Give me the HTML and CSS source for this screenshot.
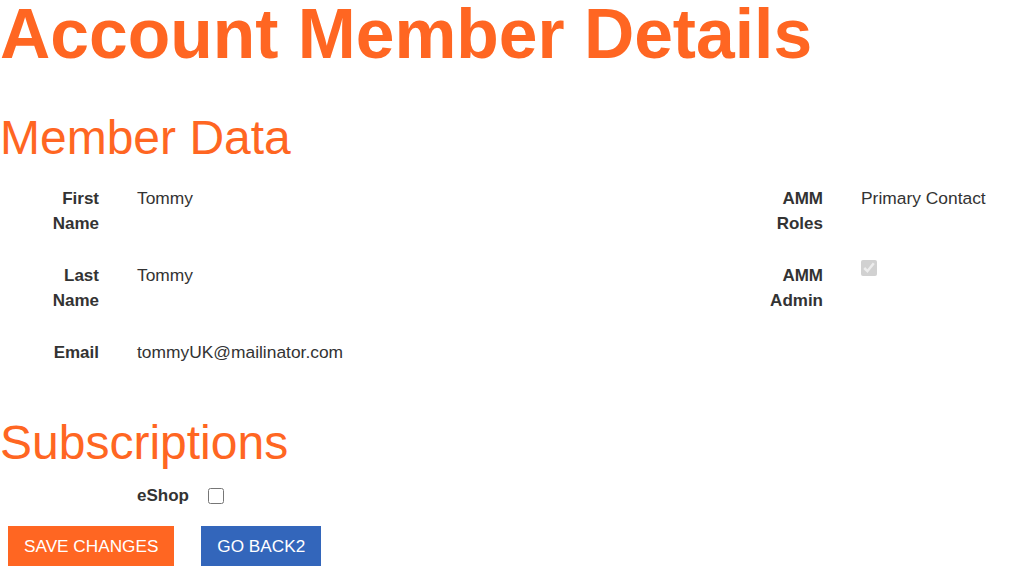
FILE: index.html
```html
<!DOCTYPE html>
<html lang="en">
<head>
  <meta charset="UTF-8">
  <title>Account Member Details</title>
  <link rel="stylesheet" href="styles.css">
</head>
<body>
  <h1 class="page-title">Account Member Details</h1>

  <h2 class="section-title">Member Data</h2>
  <div class="details">
    <dl class="field-list">
      <dt>First Name</dt>
      <dd>Tommy</dd>
      <dt>Last Name</dt>
      <dd>Tommy</dd>
      <dt>Email</dt>
      <dd>tommyUK@mailinator.com</dd>
    </dl>
    <dl class="field-list field-list-side">
      <dt>AMM Roles</dt>
      <dd>Primary Contact</dd>
      <dt>AMM Admin</dt>
      <dd><input type="checkbox" class="admin-check" checked disabled></dd>
    </dl>
  </div>

  <h2 class="section-title section-subs">Subscriptions</h2>
  <div class="subscription">
    <label for="eshop">eShop</label>
    <input type="checkbox" id="eshop">
  </div>

  <div class="actions">
    <button class="btn btn-save">Save Changes</button>
    <button class="btn btn-back">Go Back2</button>
  </div>
</body>
</html>
```

FILE: styles.css
```css
body {
  margin: 0;
  font-family: "Liberation Sans", Arial, sans-serif;
  font-size: 17px;
  line-height: 25px;
  color: #333;
  background: #fff;
}
.page-title {
  margin: 0;
  font-size: 69.6px;
  line-height: 68px;
  font-weight: bold;
  color: #ff6622;
}
.section-title {
  margin: 44px 0 0;
  font-size: 48px;
  line-height: 52px;
  font-weight: normal;
  color: #ff6622;
}
.section-subs {
  margin-top: 52px;
}
.details {
  display: flex;
  margin-top: 22px;
}
.field-list {
  flex: 1;
  display: grid;
  grid-template-columns: 99px 1fr;
  column-gap: 38px;
  row-gap: 27px;
  align-content: start;
  margin: 0;
}
.field-list-side {
  flex: 0 0 292px;
}
.field-list dt {
  padding-left: 15px;
  text-align: right;
  font-weight: bold;
}
.field-list dd {
  margin: 0;
  font-size: 17.4px;
}
.admin-check {
  display: block;
  width: 16px;
  height: 16px;
  margin: -3px 0 0;
}
.subscription {
  display: flex;
  align-items: center;
  gap: 19px;
  margin: 14px 0 0 137px;
  font-weight: bold;
}
.subscription input {
  width: 16px;
  height: 16px;
  margin: 0;
}
.actions {
  display: flex;
  gap: 27px;
  margin-top: 18px;
  padding-left: 8px;
}
.btn {
  border: none;
  padding: 10px 16px;
  font-family: inherit;
  font-size: 17.2px;
  line-height: 20px;
  text-transform: uppercase;
  color: #fff;
  cursor: pointer;
}
.btn-save {
  background-color: #ff6622;
}
.btn-back {
  background-color: #3366bb;
}
```
